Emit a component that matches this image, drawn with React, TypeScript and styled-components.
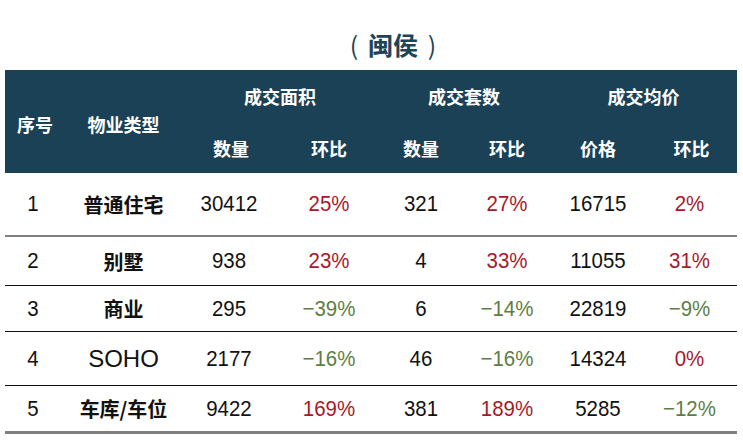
import React from "react";
import styled, { createGlobalStyle } from "styled-components";

const Global = createGlobalStyle`
  html, body { margin: 0; padding: 0; background: #ffffff; }
  body { width: 743px; height: 443px; overflow: hidden; }
`;

const COLS = "60px 117px 98px 98px 86px 86px 96px 91px";

const Page = styled.div`
  width: 743px;
  padding: 0 6px 0 5px;
  box-sizing: border-box;
`;

const Title = styled.h1`
  margin: 0;
  height: 70px;
  padding: 27px 0 0 44px;
  box-sizing: border-box;
  text-align: center;
  font-family: "Noto Sans CJK SC", "Noto Sans", sans-serif;
  font-weight: 700;
  font-size: 25px;
  line-height: 34px;
  color: #1d4457;
  white-space: pre;
`;

const Paren = styled.span`
  font-weight: 400;
  margin: 0 4px;
`;

const Header = styled.div`
  display: grid;
  grid-template-columns: ${COLS};
  grid-template-rows: 52px 51px;
  background: #1b4157;
  color: #ffffff;
  font-family: "Noto Sans CJK SC", "Noto Sans", sans-serif;
  font-weight: 700;
  font-size: 18px;
`;

const HCell = styled.div<{ $rows?: number; $cols?: number }>`
  display: flex;
  align-items: center;
  justify-content: center;
  grid-row: span ${(p) => p.$rows ?? 1};
  grid-column: span ${(p) => p.$cols ?? 1};
  padding-top: ${(p) => (p.$rows === 2 ? "4px" : "0")};
`;

const Row = styled.div<{ $h: number; $line: string; $lw: number }>`
  display: grid;
  grid-template-columns: ${COLS};
  height: ${(p) => p.$h}px;
  border-bottom: ${(p) => p.$lw}px solid ${(p) => p.$line};
  box-sizing: border-box;
  align-items: center;
`;

const Cell = styled.div<{ $tone?: "up" | "down" | "plain"; $dx?: number }>`
  text-align: center;
  font-family: "Liberation Sans", Arial, sans-serif;
  font-size: 22px;
  color: ${(p) => (p.$tone === "up" ? "#a8172a" : p.$tone === "down" ? "#5e7d45" : "#111111")};
  transform: translateX(${(p) => p.$dx ?? 0}px) scaleX(0.93);
`;

const TypeCell = styled.div<{ $latin?: boolean }>`
  text-align: center;
  font-family: ${(p) =>
    p.$latin
      ? `"Liberation Sans", Arial, sans-serif`
      : `"Noto Sans CJK SC", "Noto Sans", sans-serif`};
  font-weight: ${(p) => (p.$latin ? 400 : 700)};
  font-size: ${(p) => (p.$latin ? "24px" : "20px")};
  color: #111111;
`;

interface Item {
  no: number;
  type: string;
  latin?: boolean;
  area: string;
  areaPct: string;
  units: string;
  unitsPct: string;
  price: string;
  pricePct: string;
  h: number;
  line: string;
  lw: number;
}

const data: Item[] = [
  { no: 1, type: "普通住宅", area: "30412", areaPct: "25%", units: "321", unitsPct: "27%", price: "16715", pricePct: "2%", h: 64, line: "#7f7f7f", lw: 2 },
  { no: 2, type: "别墅", area: "938", areaPct: "23%", units: "4", unitsPct: "33%", price: "11055", pricePct: "31%", h: 49, line: "#111111", lw: 1 },
  { no: 3, type: "商业", area: "295", areaPct: "−39%", units: "6", unitsPct: "−14%", price: "22819", pricePct: "−9%", h: 46, line: "#111111", lw: 1 },
  { no: 4, type: "SOHO", latin: true, area: "2177", areaPct: "−16%", units: "46", unitsPct: "−16%", price: "14324", pricePct: "0%", h: 54, line: "#111111", lw: 1 },
  { no: 5, type: "车库/车位", area: "9422", areaPct: "169%", units: "381", unitsPct: "189%", price: "5285", pricePct: "−12%", h: 48, line: "#7f7f7f", lw: 3 },
];

const tone = (v: string): "up" | "down" => (v.startsWith("−") ? "down" : "up");

export default function App() {
  return (
    <>
      <Global />
      <Page>
        <Title>
          <Paren>(</Paren> 闽侯 <Paren>)</Paren>
        </Title>
        <Header>
          <HCell $rows={2}>序号</HCell>
          <HCell $rows={2}>物业类型</HCell>
          <HCell $cols={2}>成交面积</HCell>
          <HCell $cols={2}>成交套数</HCell>
          <HCell $cols={2}>成交均价</HCell>
          <HCell>数量</HCell>
          <HCell>环比</HCell>
          <HCell>数量</HCell>
          <HCell>环比</HCell>
          <HCell>价格</HCell>
          <HCell>环比</HCell>
        </Header>
        {data.map((d) => (
          <Row key={d.no} $h={d.h} $line={d.line} $lw={d.lw}>
            <Cell $dx={-2}>{d.no}</Cell>
            <TypeCell $latin={d.latin}>{d.type}</TypeCell>
            <Cell $dx={-2}>{d.area}</Cell>
            <Cell $tone={tone(d.areaPct)}>{d.areaPct}</Cell>
            <Cell>{d.units}</Cell>
            <Cell $tone={tone(d.unitsPct)}>{d.unitsPct}</Cell>
            <Cell>{d.price}</Cell>
            <Cell $tone={tone(d.pricePct)} $dx={-2}>{d.pricePct}</Cell>
          </Row>
        ))}
      </Page>
    </>
  );
}
